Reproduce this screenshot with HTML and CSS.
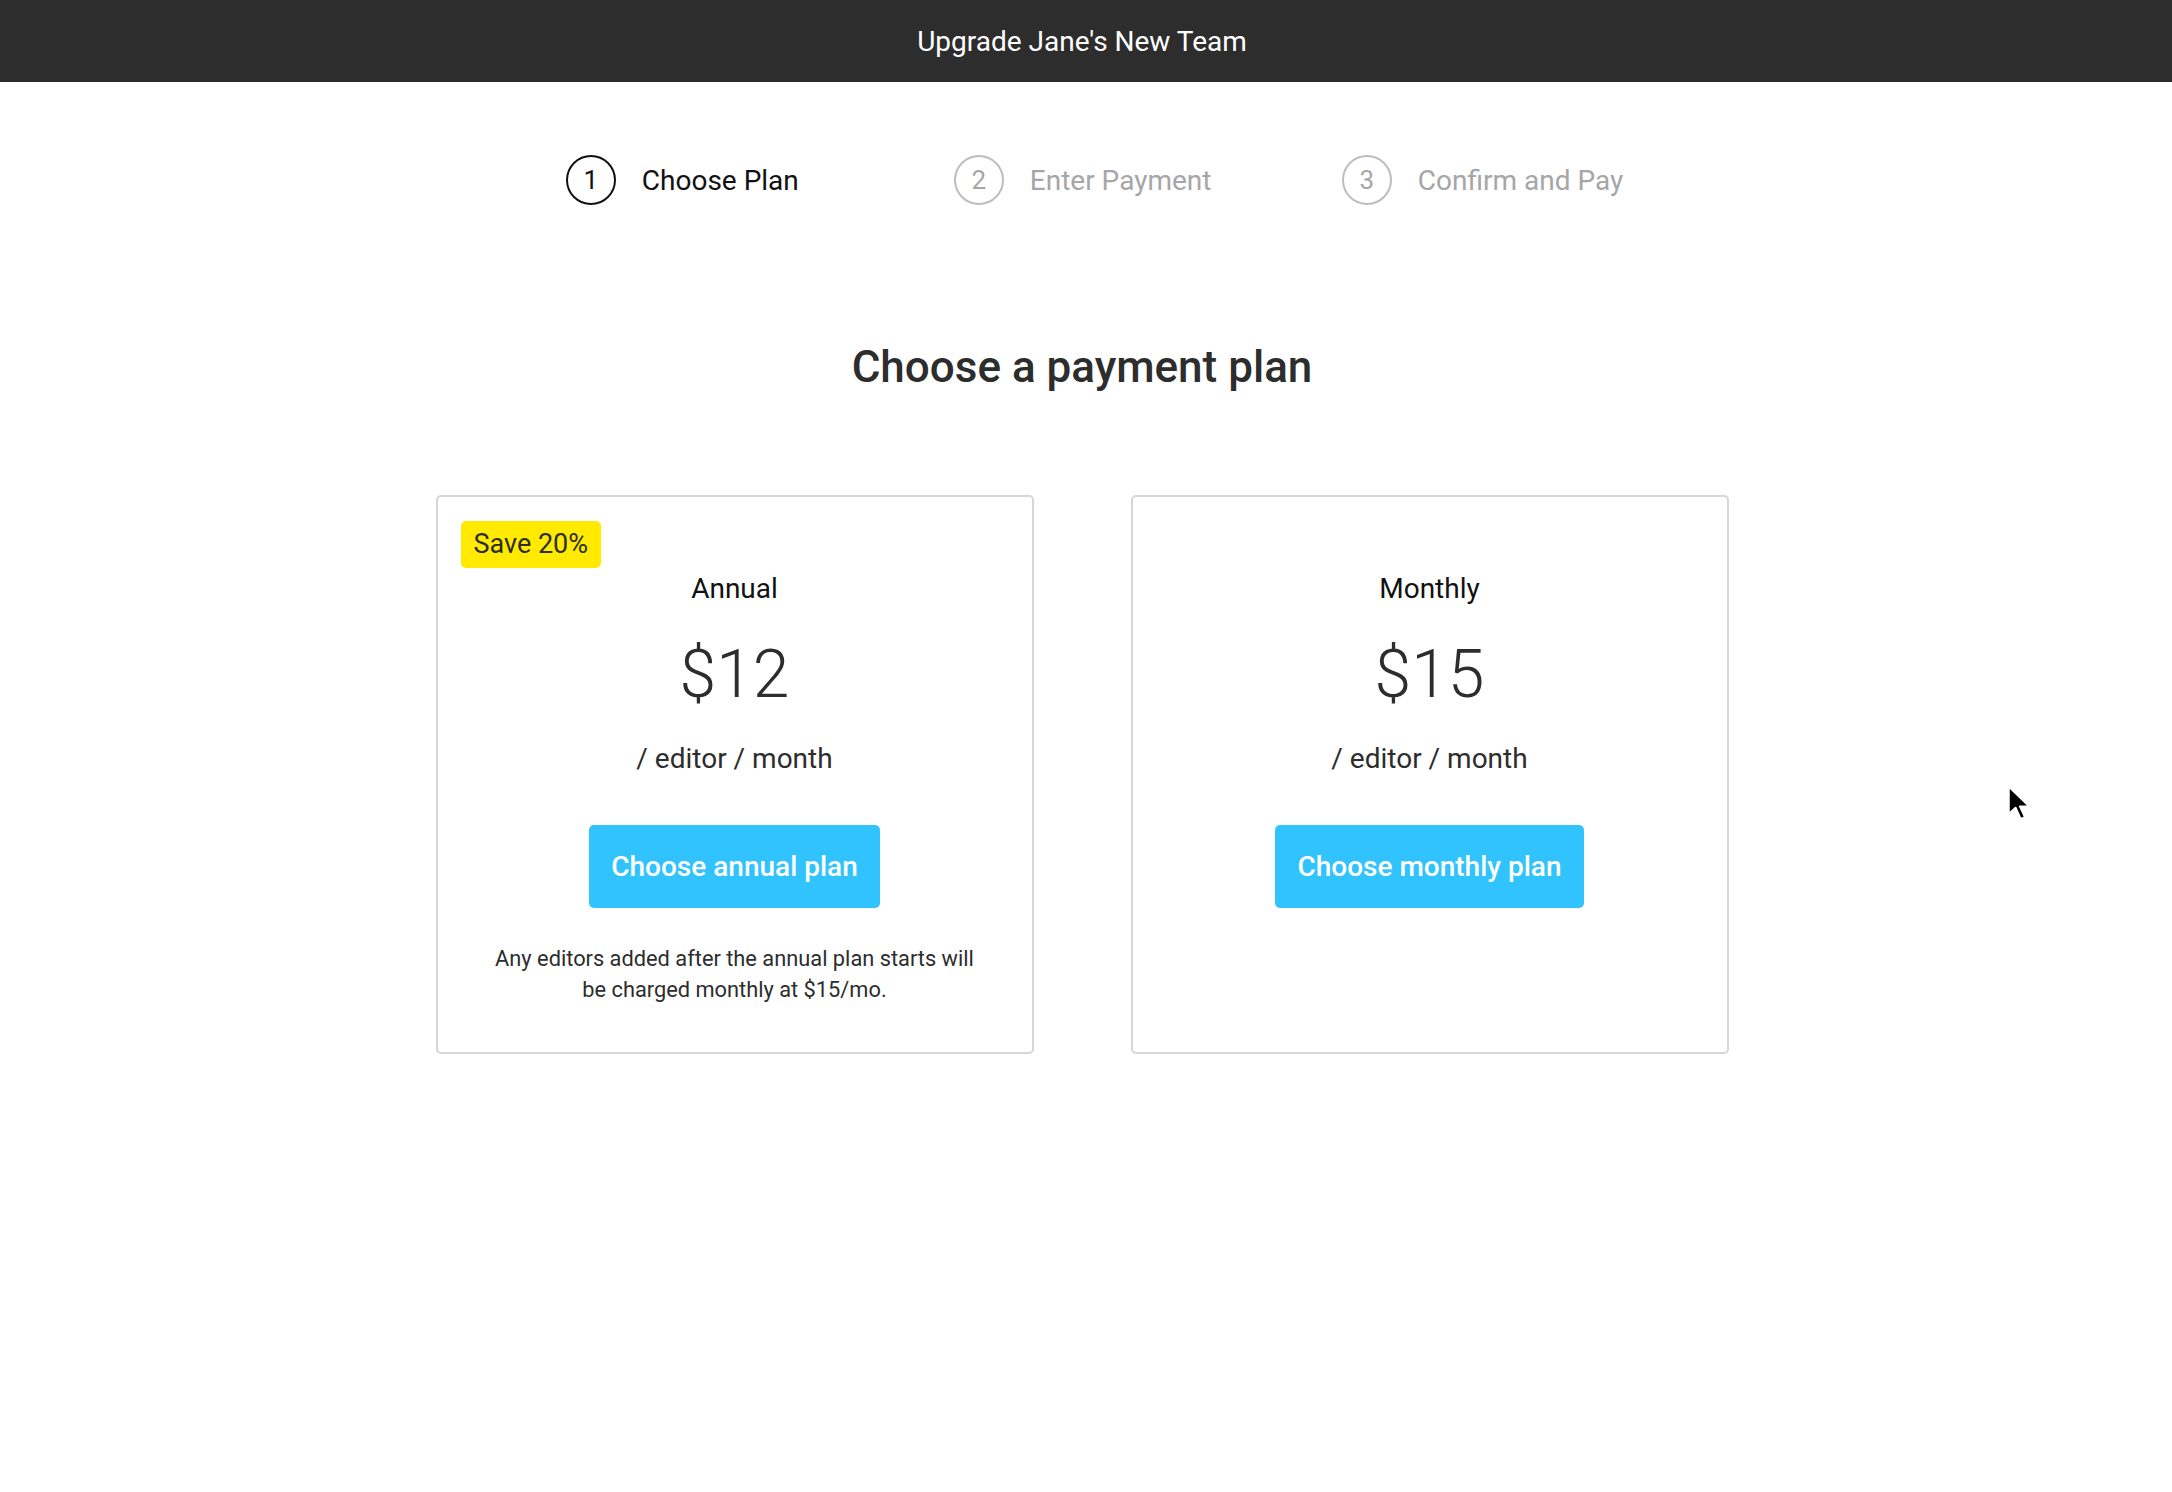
FILE: index.html
```html
<!DOCTYPE html>
<html lang="en">
<head>
<meta charset="utf-8">
<title>Upgrade Jane's New Team</title>
<link rel="stylesheet" href="styles.css">
</head>
<body>
<header class="topbar">Upgrade Jane's New Team</header>
<main class="page">
  <ol class="steps">
    <li class="step active"><span class="num">1</span><span class="label">Choose Plan</span></li>
    <li class="step"><span class="num">2</span><span class="label">Enter Payment</span></li>
    <li class="step"><span class="num">3</span><span class="label">Confirm and Pay</span></li>
  </ol>
  <h1 class="title">Choose a payment plan</h1>
  <section class="plans">
    <div class="card">
      <span class="badge">Save 20%</span>
      <div class="name">Annual</div>
      <div class="price">$12</div>
      <div class="unit">/ editor / month</div>
      <button class="btn">Choose annual plan</button>
      <p class="note">Any editors added after the annual plan starts will be charged monthly at $15/mo.</p>
    </div>
    <div class="card">
      <div class="name">Monthly</div>
      <div class="price">$15</div>
      <div class="unit">/ editor / month</div>
      <button class="btn">Choose monthly plan</button>
    </div>
  </section>
</main>
<svg class="cursor" width="28" height="40" viewBox="0 0 22 32"><path d="M2 2 L2 24 L7.5 19 L11.5 28 L15 26.5 L11 18 L18.5 18 Z" fill="#000" stroke="#fff" stroke-width="1.6" stroke-linejoin="round"/></svg>
</body>
</html>
```
FILE: styles.css
```css
* { box-sizing: border-box; }
html, body { margin: 0; padding: 0; background: #fff; }
body {
  font-family: Roboto, "Noto Sans", Arial, sans-serif;
  color: #2d2d2d;
  position: relative;
  min-height: 1492px;
}
.topbar {
  height: 82px;
  background: #2d2d2d;
  color: #fff;
  font-size: 28px;
  display: flex;
  align-items: center;
  justify-content: center;
  padding-right: 8px;
}
.page {
  padding-right: 8px;
  display: flex;
  flex-direction: column;
  align-items: center;
}
.steps {
  list-style: none;
  margin: 73px 0 0 0;
  padding: 0 0 0 25px;
  display: grid;
  grid-template-columns: 388px 388px auto;
}
.step {
  display: flex;
  align-items: center;
  color: #a6a6a6;
  font-size: 28px;
}
.step .num {
  width: 50px;
  height: 50px;
  border: 2px solid #bdbdbd;
  border-radius: 50%;
  display: flex;
  align-items: center;
  justify-content: center;
  font-size: 26px;
  margin-right: 26px;
}
.step.active { color: #111; }
.step.active .num { border-color: #111; }
.title {
  margin: 136px 0 0 0;
  font-size: 44px;
  line-height: 52px;
  font-weight: 500;
  color: #2d2d2d;
}
.plans {
  margin-top: 102px;
  display: grid;
  grid-template-columns: 598px 598px;
  gap: 97px;
}
.card {
  position: relative;
  border: 2px solid #d6d6d6;
  border-radius: 5px;
  padding: 75px 40px 47px;
  display: flex;
  flex-direction: column;
  align-items: center;
  text-align: center;
}
.badge {
  position: absolute;
  left: 23px;
  top: 24px;
  background: #ffea00;
  color: #2d2d2d;
  font-size: 27px;
  line-height: 47px;
  padding: 0 13px;
  border-radius: 5px;
}
.name {
  font-size: 28px;
  line-height: 34px;
  color: #111;
}
.price {
  margin-top: 31px;
  font-size: 66px;
  line-height: 76px;
  font-weight: 300;
  color: #2d2d2d;
}
.unit {
  margin-top: 29px;
  font-size: 28px;
  line-height: 34px;
  color: #2d2d2d;
}
.btn {
  margin-top: 49px;
  height: 83px;
  padding: 0 22px;
  background: #30c3fe;
  color: #fff;
  border: none;
  border-radius: 5px;
  font-family: inherit;
  font-size: 28px;
  font-weight: 500;
}
.note {
  margin: 35px 0 0 0;
  font-size: 21.8px;
  line-height: 31px;
  color: #2d2d2d;
  max-width: 494px;
}
.cursor {
  position: absolute;
  left: 2006px;
  top: 784px;
}
```
